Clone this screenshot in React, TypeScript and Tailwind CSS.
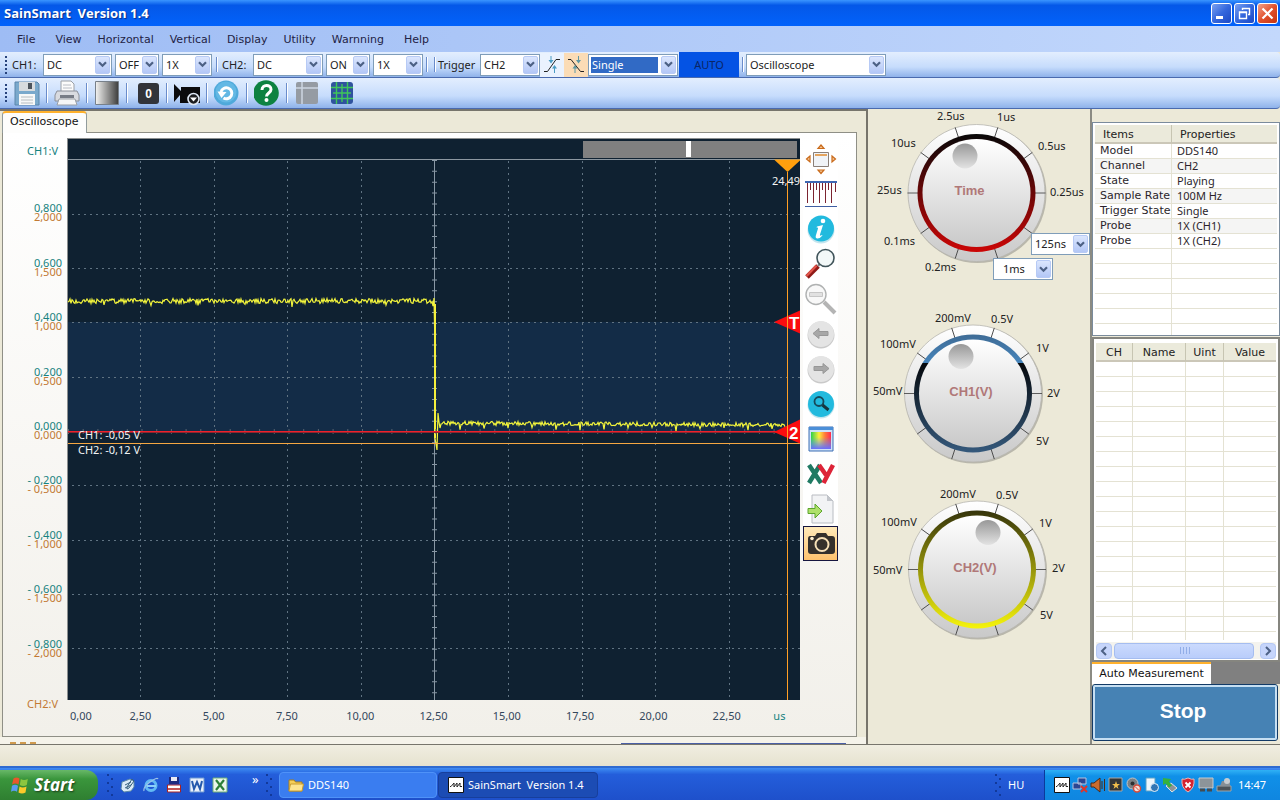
import React from 'react';

type Children = { children?: React.ReactNode };

/* ---------- shared controls ---------- */

function Chevron({ className = '' }: { className?: string }) {
  return (
    <span
      className={`pointer-events-none absolute inset-y-px right-px flex w-[15px] items-center justify-center rounded-xs border border-[#b7caf5] bg-linear-to-b from-[#dbe6fd] to-[#b3c7f6] ${className}`}
    >
      <svg width="9" height="7" viewBox="0 0 9 7" fill="none">
        <path d="M1 1.2 4.5 4.7 8 1.2" stroke="#4d6185" strokeWidth="2.2" />
      </svg>
    </span>
  );
}

function Select({ label, value, className, highlight = false }: { label: string; value: string; className: string; highlight?: boolean }) {
  return (
    <span className={`relative flex h-[22px] shrink-0 border border-[#7f9db9] bg-white p-[2px] ${className}`}>
      <select
        aria-label={label}
        defaultValue={value}
        className={`w-full appearance-none pr-4 pl-px font-['Noto_Sans',sans-serif] text-[11px] leading-4 outline-none ${highlight ? 'mr-[17px] bg-[#316ac5] text-white' : 'bg-white text-[#222]'}`}
      >
        <option>{value}</option>
      </select>
      <Chevron />
    </span>
  );
}

function Grip() {
  return (
    <span className="flex w-3 shrink-0 flex-col items-center justify-center gap-[2px]">
      {[0, 1, 2, 3, 4].map((i) => (
        <i key={i} className="size-[2px] bg-[#27437b]" />
      ))}
    </span>
  );
}

function Sep({ className = 'w-[10px]' }: { className?: string }) {
  return (
    <span className={`flex shrink-0 justify-center self-stretch py-[5px] ${className}`}>
      <i className="w-px bg-[#6a8ccb]" />
      <i className="w-px bg-white" />
    </span>
  );
}

/* ---------- window chrome ---------- */

function CaptionButton({ label, className, children }: Children & { label: string; className: string }) {
  return (
    <button aria-label={label} className={`flex size-[21px] items-center justify-center rounded-[3px] border border-white ${className}`}>
      <svg width="15" height="15" viewBox="0 0 15 15" fill="none" stroke="#fff">
        {children}
      </svg>
    </button>
  );
}

function TitleBar() {
  const blue = 'bg-linear-to-br from-[#7ba0f0] via-[#3467dd] to-[#1c48c4]';
  return (
    <header className="flex h-[26px] items-center bg-linear-to-b from-[#3a95ff] via-[#0458e8] via-20% to-[#0262fb] pr-[2px] pl-1">
      <h1 className="flex-1 font-['Open_Sans',sans-serif] text-[13px] font-bold whitespace-pre text-white [text-shadow:1px_1px_1px_#0a2f8a]">SainSmart  Version 1.4</h1>
      <div className="flex gap-[2px]">
        <CaptionButton label="Minimize" className={blue}>
          <path d="M2 11.5h7" strokeWidth="3" />
        </CaptionButton>
        <CaptionButton label="Restore" className={blue}>
          <path d="M5.5 4V2.5h7v6H11M5 2.5h8" strokeWidth="1.4" />
          <path d="M2.5 6h7v6.5h-7zM2 6.5h8" strokeWidth="1.4" />
        </CaptionButton>
        <CaptionButton label="Close" className="bg-linear-to-br from-[#f0a088] via-[#e1502b] to-[#c5330f]">
          <path d="m2.5 2.5 10 10m0-10-10 10" strokeWidth="2.2" />
        </CaptionButton>
      </div>
    </header>
  );
}

function MenuBar() {
  const items = ['File', 'View', 'Horizontal', 'Vertical', 'Display', 'Utility', 'Warnning', 'Help'];
  return (
    <nav className="flex h-[26px] items-center bg-linear-to-r from-[#9ebcf4] to-[#c3d8fc] pt-px pl-[9px]">
      {items.map((m, i) => (
        <button key={m} className={`px-2 py-1 text-[#222244] ${i === 0 || i === 6 ? 'mr-1' : ''}`}>
          {m}
        </button>
      ))}
    </nav>
  );
}

const barClass = 'flex items-center rounded-r border-b border-[#4a6aae] bg-linear-to-b from-[#e3eefe] via-[#c6dcfc] via-60% to-[#8fb2ea]';

function SettingsBar() {
  const label = "shrink-0 font-['Noto_Sans',sans-serif] text-[#222]";
  return (
    <div className={`${barClass} h-[26px]`}>
      <Grip />
      <span className={`${label} w-[31px]`}>CH1:</span>
      <div className="flex gap-[3px]">
        <Select label="CH1 coupling" value="DC" className="w-[69px]" />
        <Select label="CH1 enabled" value="OFF" className="w-[44px]" />
        <Select label="CH1 probe" value="1X" className="w-[50px]" />
      </div>
      <Sep />
      <span className={`${label} w-[31px]`}>CH2:</span>
      <div className="flex gap-[3px]">
        <Select label="CH2 coupling" value="DC" className="w-[70px]" />
        <Select label="CH2 enabled" value="ON" className="w-[44px]" />
        <Select label="CH2 probe" value="1X" className="w-[50px]" />
      </div>
      <Sep className="w-[8px]" />
      <Sep className="w-[7px]" />
      <span className={`${label} w-[42px]`}>Trigger</span>
      <Select label="Trigger source" value="CH2" className="w-[60px]" />
      <button aria-label="Rising edge" className="flex h-6 w-6 items-center justify-center bg-[#eaf2fe]">
        <svg width="18" height="18" viewBox="0 0 18 18" fill="none">
          <path d="M1 15.5h3.500L13 3.500h4" stroke="#222" />
          <path d="M8 0v4M11.500 17v-5" stroke="#4a9cc4" />
          <path d="M5.500 4h5L8 7.500zM9 12.500h5L11.500 9z" fill="#4a9cc4" />
        </svg>
      </button>
      <button aria-label="Falling edge" className="flex h-6 w-6 items-center justify-center bg-[#fbdcb6]">
        <svg width="18" height="18" viewBox="0 0 18 18" fill="none">
          <path d="M1 3.500h3L13.500 15.500H17" stroke="#222" />
          <path d="M11.500 0v4M8 17v-5" stroke="#5c98a4" />
          <path d="M9 4h5l-2.500 3.500zM5.500 12.500h5L8 9z" fill="#5c98a4" />
        </svg>
      </button>
      <Select label="Trigger mode" value="Single" className="w-[90px]" highlight />
      <button className="ml-px h-[25px] w-[60px] bg-[#0453e4] font-['Noto_Sans',sans-serif] text-[#0a2566]">AUTO</button>
      <Sep className="w-[7px]" />
      <Select label="Device mode" value="Oscilloscope" className="w-[140px]" />
    </div>
  );
}

function IconButton({ label, children, className = '' }: Children & { label: string; className?: string }) {
  return (
    <button aria-label={label} className={`flex h-7 w-[30px] shrink-0 items-center justify-center ${className}`}>
      <svg width="26" height="26" viewBox="0 0 26 26" fill="none">
        {children}
      </svg>
    </button>
  );
}

function IconBar() {
  return (
    <div className={`${barClass} h-[31px]`}>
      <Grip />
      <IconButton label="Save">
        <path d="M1 2h22l2 2v21H1z" fill="#7aa9cc" stroke="#5b86ab" />
        <path d="M5 2h16v9H5z" fill="#d7dbde" />
        <path d="M14 3h4v6h-4z" fill="#4c545c" />
        <path d="M5 14h16v11H5z" fill="#f7f8f8" />
        <path d="M7 17h12M7 20h12M7 23h12" stroke="#b6bcc0" />
      </IconButton>
      <Sep />
      <IconButton label="Print">
        <path d="M7 1h10l3 3v8H7z" fill="#fbfbfb" stroke="#9a9fa6" />
        <path d="M9 5h8M9 8h9" stroke="#b8bcc4" />
        <path d="M3 11h20l2 4v6H1v-6z" fill="#d9dbe0" stroke="#8b8f98" />
        <path d="M6 15h14v3H6z" fill="#777c86" />
        <path d="M5 19h16l2 6H3z" fill="#f6f6f7" stroke="#9a9fa6" />
      </IconButton>
      <Sep />
      <IconButton label="Gray scale">
        <defs>
          <linearGradient id="gray-scale">
            <stop stopColor="#f4f4f2" />
            <stop offset="1" stopColor="#3c3c3c" />
          </linearGradient>
        </defs>
        <path d="M1.500 1.500h23v23h-23z" fill="url(#gray-scale)" stroke="#77808a" />
      </IconButton>
      <Sep />
      <IconButton label="Reset to zero">
        <rect x="4" y="3" width="21" height="21" rx="3" fill="#32343a" />
        <text x="14.500" y="18" textAnchor="middle" fill="#fff" fontFamily="Liberation Sans, sans-serif" fontWeight="bold" fontSize="12">0</text>
      </IconButton>
      <Sep />
      <IconButton label="Record">
        <path d="M0 4v18l6-7v8h20V7H7v4z" fill="#0b0b0d" />
        <circle cx="19.500" cy="19" r="5.500" fill="#1c1d20" stroke="#dfe8f5" strokeWidth="1.600" />
        <path d="m16 17.500 3.500 4 3.500-4z" fill="#fff" />
      </IconButton>
      <Sep />
      <IconButton label="Refresh">
        <circle cx="12" cy="13" r="12.500" fill="#4fa9da" />
        <circle cx="12" cy="12" r="10.500" fill="#63b8e4" />
        <path d="M9.500 18a5.500 5.500 0 1 0-2.500-6" stroke="#fff" strokeWidth="3" />
        <path d="m3.500 11.500 4 6.500 5-6z" fill="#fff" />
      </IconButton>
      <Sep />
      <IconButton label="Help">
        <circle cx="12" cy="13" r="12.800" fill="#0d8241" />
        <path d="M8 10c0-6 9-6 9-.5 0 3.500-4.500 3.500-4.500 7" stroke="#fff" strokeWidth="3" />
        <circle cx="12.500" cy="20" r="2" fill="#fff" />
      </IconButton>
      <Sep />
      <IconButton label="Layout">
        <rect x="2" y="2" width="22" height="22" rx="2" fill="#959ba3" />
        <path d="M2 8h22M8 2v22" stroke="#cdd6e2" strokeWidth="1.500" />
      </IconButton>
      <IconButton label="Grid" className="ml-[5px]">
        <rect x="2" y="2" width="22" height="22" rx="3" fill="#2f529e" />
        <path d="M7.500 2v22M18.500 2v22M2 7.500h22M2 18.500h22M13 4v18M4 13h18" stroke="#3fc65a" strokeWidth="1.400" />
      </IconButton>
    </div>
  );
}

/* ---------- chart ---------- */

function noise(i: number) {
  const v = Math.sin(i * 127.1 + 11.7) * 43758.5453;
  return v - Math.floor(v) - 0.5;
}

function buildTrace() {
  const points: string[] = [];
  for (let x = 1; x < 367; x += 1) {
    const spike = x % 47 === 37 ? 4 : 0;
    points.push(`${x},${(163 + noise(x) * 5 + spike).toFixed(1)}`);
  }
  points.push('367,160', '368,210', '368,300', '369,306', '370,312', '371,275', '372,284', '373,290');
  for (let x = 374; x < 719; x += 1) {
    const spike = x % 24 === 9 ? 5 : 0;
    points.push(`${x},${(285 + (x - 374) / 170 + noise(x) * 4 + spike).toFixed(1)}`);
  }
  return points.join(' ');
}

const trace = buildTrace();
const gridX = [73, 147, 220, 294, 441, 515, 588, 662];
const gridY = [76, 130, 184, 239, 347, 402, 456, 510];

function Plot() {
  return (
    <svg className="absolute inset-0 h-full w-full bg-[#0f2131]" viewBox="0 0 733 562" preserveAspectRatio="none" role="img" aria-label="Oscilloscope trace">
      <rect y="184" width="733" height="109" fill="#132c47" />
      <path d="M0 .5h733M.5 0v562" stroke="#8c8f8f" />
      <path d="M0 21.500h733" stroke="#8d98a1" />
      <g stroke="#607382" strokeDasharray="2 4">
        {gridX.map((x) => (
          <path key={x} d={`M${x + 0.5} 23V562`} />
        ))}
        {gridY.map((y) => (
          <path key={y} d={`M5 ${y + 0.5}H733`} />
        ))}
      </g>
      <path d="M367.500 22V562" stroke="#8998a5" />
      <path d="M367.500 22V562" stroke="#8998a5" strokeWidth="5" strokeDasharray="1 9.860" />
      <polyline points={trace} fill="none" stroke="#f2f43c" strokeWidth="1.200" />
      <rect x="367" y="166" width="2" height="134" fill="#f4ef3c" />
      <path d="M1 293.500h732" stroke="#59636f" strokeWidth="5" strokeDasharray="1 13.700" />
      <rect x="1" y="293" width="732" height="1" fill="#f0202a" />
      <rect x="1" y="294" width="732" height="1" fill="#8c2630" />
      <rect x="1" y="305" width="732" height="1" fill="#f5a742" />
      <rect x="516" y="3" width="214" height="17" fill="#808080" />
      <rect x="619" y="3" width="5" height="16" fill="#fff" />
      <path d="M707 21.500h26v1L720.500 34z" fill="#ff9f0e" />
      <path d="m707 184 26-11.500v23zM707 294l26-12.500v24z" fill="#fa0d10" />
      <g fill="#fff" fontFamily="Liberation Sans, sans-serif" fontWeight="bold" fontSize="17">
        <text x="722" y="191">T</text>
        <text x="722" y="301">2</text>
      </g>
      <rect x="720" y="34" width="1" height="528" fill="#ff9f24" />
      <g fill="#f2f4f5" fontFamily="Noto Sans, sans-serif" fontSize="11">
        <text x="705" y="47">24,49</text>
        <text x="11" y="301">CH1: -0,05 V</text>
        <text x="11" y="316">CH2: -0,12 V</text>
      </g>
    </svg>
  );
}

const yLabels = [
  ['0,800', '2,000'],
  ['0,600', '1,500'],
  ['0,400', '1,000'],
  ['0,200', '0,500'],
  ['0,000', '0,000'],
  ['- 0,200', '- 0,500'],
  ['- 0,400', '- 1,000'],
  ['- 0,600', '- 1,500'],
  ['- 0,800', '- 2,000'],
];
const xLabels = ['2,50', '5,00', '7,50', '10,00', '12,50', '15,00', '17,50', '20,00', '22,50'];

function SideTool({ label, children, active = false }: Children & { label: string; active?: boolean }) {
  return (
    <button
      aria-label={label}
      className={`flex h-[35px] w-[35px] items-center justify-center ${active ? 'border border-[#161640] bg-linear-to-b from-[#ffe9b8] to-[#ffc26e]' : ''}`}
    >
      <svg width="32" height="32" viewBox="0 0 32 32" fill="none" className="shrink-0">
        {children}
      </svg>
    </button>
  );
}

function SideTools() {
  return (
    <div className="mt-[3px] ml-[3px] flex flex-col self-start bg-white">
      <SideTool label="Fit to window">
        <path d="M8.500 9.500h15v14h-15z" fill="#f0f3f7" stroke="#8a7f78" />
        <path d="M10 12h12" stroke="#e08a2c" strokeWidth="1.500" />
        <path d="m13 5.500 3-3.500 3 3.500zM13 27l3 3.500 3-3.500zM5 13l-3.500 3L5 19zM27 13l3.500 3-3.500 3z" fill="#f5c694" stroke="#c96a1a" strokeWidth="1.200" />
      </SideTool>
      <SideTool label="Ruler">
        <path d="M0 4h32" stroke="#3f68b2" strokeWidth="2" />
        <path d="M0 28.500h32" stroke="#3f5ea2" />
        <path d="M2.500 5v20M8.500 5v20M14.500 5v20M20.500 5v20M26.500 5v20" stroke="#7c2430" />
        <path d="M5.500 5v7M11.500 5v7M17.500 5v7M23.500 5v7M30.500 5v9" stroke="#7c2430" />
      </SideTool>
      <SideTool label="Information">
        <circle cx="16" cy="17" r="13.500" fill="#c3e5ee" />
        <circle cx="16" cy="15.500" r="13" fill="#22bade" />
        <circle cx="18" cy="8" r="2.300" fill="#fff" />
        <path d="M12 13.500l6-1.500-3 9.500q-.5 2 2 .5l.5.500q-3 3.500-5.500 3-2-.5-1-3.500l2-6.500q.3-1.500-1.500-1z" fill="#fff" />
      </SideTool>
      <SideTool label="Zoom in">
        <path d="M2 29 13 18" stroke="#8f1a17" strokeWidth="5" />
        <path d="m1.500 28 10-10.500" stroke="#e0544a" strokeWidth="2.500" />
        <path d="m13 18 3-3.500" stroke="#888" strokeWidth="2.500" />
        <circle cx="20.500" cy="10" r="8.500" fill="#f3f8f8" stroke="#40545a" strokeWidth="1.600" />
      </SideTool>
      <SideTool label="Zoom out">
        <path d="m19 19 11 11" stroke="#b4b4b4" strokeWidth="4" />
        <circle cx="11" cy="11.500" r="10" fill="#f8f8f8" stroke="#b0b2b2" strokeWidth="1.400" />
        <path d="M4.500 9.500h13v4h-13z" fill="#e1e1e1" stroke="#c6c6c6" />
      </SideTool>
      <SideTool label="Previous">
        <circle cx="16" cy="17" r="13.500" fill="#c9c9c9" />
        <circle cx="16" cy="16" r="13" fill="#e4e4e4" />
        <path d="m8 15.500 6-5v3h9v4h-9v3z" fill="#a7a7a7" stroke="#979797" />
      </SideTool>
      <SideTool label="Next">
        <circle cx="16" cy="17" r="13.500" fill="#c9c9c9" />
        <circle cx="16" cy="16" r="13" fill="#e4e4e4" />
        <path d="m24 15.500-6-5v3H9v4h9v3z" fill="#a7a7a7" stroke="#979797" />
      </SideTool>
      <SideTool label="Search">
        <circle cx="16" cy="17" r="13.500" fill="#c3e5ee" />
        <circle cx="16" cy="16" r="13" fill="#22bade" />
        <circle cx="14" cy="13.500" r="4.500" stroke="#17495a" strokeWidth="1.800" />
        <path d="m17.500 17 6 5" stroke="#17353f" strokeWidth="3" />
      </SideTool>
      <SideTool label="Colors">
        <defs>
          <linearGradient id="hue">
            <stop stopColor="#2fd04a" />
            <stop offset=".4" stopColor="#ffee3a" />
            <stop offset=".7" stopColor="#ff7a3a" />
            <stop offset="1" stopColor="#ff2a50" />
          </linearGradient>
          <linearGradient id="shade" x2="0" y2="1">
            <stop offset=".3" stopColor="#4aa0ff" stopOpacity="0" />
            <stop offset="1" stopColor="#6a6cff" />
          </linearGradient>
        </defs>
        <path d="M4 4h24v24H4z" fill="#cfe2f8" stroke="#3c6fb4" />
        <path d="M4 4h24v3H4z" fill="#4b8fd8" />
        <path d="M6 9h20v17H6z" fill="url(#hue)" />
        <path d="M6 9h20v17H6z" fill="url(#shade)" />
      </SideTool>
      <SideTool label="XY mode">
        <path d="m4 7 12 18M15 7 4 25" stroke="#207a63" strokeWidth="4.500" />
        <path d="m14 7 7 10M28 7l-9.500 18" stroke="#dd2438" strokeWidth="4.500" />
      </SideTool>
      <SideTool label="Export">
        <path d="M7 2h15l6 6v22H7z" fill="#f2f3f5" stroke="#b9bcc2" />
        <path d="M22 2v6h6z" fill="#c2c5cb" />
        <path d="M3 15.500h7V11l7 7-7 7v-4.500H3z" fill="#aee06a" stroke="#5da52e" />
      </SideTool>
      <SideTool label="Snapshot" active>
        <path d="M5 8h5l2-3h9l2 3h4q3 0 3 3v12q0 3-3 3H6q-3 0-3-3V11q0-3 2-3z" fill="#35302c" />
        <circle cx="17" cy="16.500" r="6.500" fill="#35302c" stroke="#f6dfb6" strokeWidth="2" />
        <circle cx="7" cy="10.500" r="1.800" fill="#fff0d0" />
      </SideTool>
    </div>
  );
}

function ScopePanel() {
  return (
    <section className="flex min-w-0 flex-1 flex-col border-r-2 border-[#77746b] bg-[#ece9d8]">
      <div className="flex h-[23px] items-end border-t-2 border-[#77756c] pl-[2px]">
        <button className="z-10 -mb-px h-[22px] rounded-t-sm border border-t-2 border-b-0 border-[#919b9c] border-t-[#ffb12c] bg-[#fdfdfc] px-[7px] pb-[2px] text-[#111]">Oscilloscope</button>
      </div>
      <div className="mr-[9px] ml-[2px] flex min-h-0 flex-1 flex-col border border-[#8f8f86] bg-linear-to-b from-white to-[#f2f0ea] pt-[5px]">
        <div className="flex min-h-0 flex-1">
          <div className="-mb-[11px] flex w-[64px] shrink-0 flex-col pr-[5px] text-right font-['Noto_Sans',sans-serif] leading-[9px]">
            <span className="h-[47px] pt-2 pr-1 text-[#16827f]">CH1:V</span>
            {yLabels.map(([a, b]) => (
              <span key={a} className="flex flex-1 flex-col justify-center">
                <span className="text-[#16827f]">{a}</span>
                <span className="text-[#c27a34]">{b}</span>
              </span>
            ))}
            <span className="h-9 pt-6 pr-1 text-[#c27a34]">CH2:V</span>
          </div>
          <div className="relative min-h-[300px] min-w-0 flex-1">
            <Plot />
          </div>
          <SideTools />
          <div className="w-[18px] shrink-0" />
        </div>
        <div className="mr-14 ml-[64px] flex h-9 shrink-0 pt-2 font-['Noto_Sans',sans-serif] text-[#33475c]">
          <span className="min-w-0 flex-1">
            <span className="block pl-[3px]">0,00</span>
          </span>
          {xLabels.map((x) => (
            <span key={x} className="min-w-0 flex-[2] text-center">{x}</span>
          ))}
          <span className="min-w-0 flex-1">
            <span className="block pl-[10px] text-[#16827f]">us</span>
          </span>
        </div>
      </div>
      <div className="flex h-[7px] shrink-0 items-end justify-between bg-[#f5f3ea] pr-5 pl-[10px]">
        <i className="w-[26px] border-t-2 border-dashed border-[#cf9a4e]" />
        <i className="w-[225px] border-t border-[#4a5fa5]" />
      </div>
    </section>
  );
}

/* ---------- knobs ---------- */

type KnobProps = {
  id: string;
  title: string;
  height: number;
  cx: number;
  cy: number;
  dot: number;
  stops: [number, string][];
  labels: [string, number, number][];
};

function Knob({ id, title, height, cx, cy, dot, stops, labels }: KnobProps) {
  return (
    <svg width="222" height={height} viewBox={`0 0 222 ${height}`} className="block" role="group" aria-label={title}>
      <defs>
        <linearGradient id={`${id}-ring`} x2="0" y2="1">
          {stops.map(([o, c], i) => (
            <stop key={i} offset={o} stopColor={c} />
          ))}
        </linearGradient>
        <linearGradient id={`${id}-face`} x2="0" y2="1">
          <stop stopColor="#fff" />
          <stop offset="1" stopColor="#c9c9c9" />
        </linearGradient>
        <linearGradient id={`${id}-dot`} x2="0" y2="1">
          <stop stopColor="#989898" />
          <stop offset="1" stopColor="#e3e3e3" />
        </linearGradient>
      </defs>
      <circle cx={cx + 1} cy={cy + 1} r="69" fill="#b9b7ab" />
      <circle cx={cx} cy={cy} r="68.500" fill={`url(#${id}-face)`} stroke="#b6b5ae" strokeWidth=".8" />
      {[0, 36, 72, 108, 144, 180, 216, 252, 288, 324].map((a) => (
        <path key={a} d={`M${cx + 58} ${cy}h11`} stroke="#4c4c4c" strokeWidth=".9" transform={`rotate(${a} ${cx} ${cy})`} />
      ))}
      <circle cx={cx} cy={cy} r="59" fill={`url(#${id}-ring)`} />
      <circle cx={cx} cy={cy} r="54" fill={`url(#${id}-face)`} />
      <circle cx={cx + dot} cy={cy - 37} r="12.500" fill={`url(#${id}-dot)`} />
      <text x={id === 'time' ? cx - 7 : cx - 2} y={cy + 2} textAnchor="middle" fill="#b07878" fontFamily="Liberation Sans, sans-serif" fontWeight="bold" fontSize="13">{title}</text>
      <g fill="#222" fontFamily="Noto Sans, sans-serif" fontSize="11">
        {labels.map(([t, x, y]) => (
          <text key={t} x={x} y={y}>{t}</text>
        ))}
      </g>
    </svg>
  );
}

function KnobPanel() {
  return (
    <section className="relative w-[224px] shrink-0 border-r-2 border-[#8b8b83] bg-[#ece9d8]">
      <Knob
        id="time" title="Time" height={200} cx={108.5} cy={84} dot={-11.5}
        stops={[[0, '#080808'], [1, '#cc0606']]}
        labels={[['2.5us', 69, 11], ['1us', 129, 12], ['10us', 23, 38], ['0.5us', 170, 41], ['25us', 9, 85], ['0.25us', 182, 87], ['0.1ms', 16, 136], ['0.2ms', 57, 162]]}
      />
      <Knob
        id="ch1" title="CH1(V)" height={176} cx={105} cy={84.5} dot={-12}
        stops={[[0, '#3f6c96'], [0.24, '#4684ba'], [0.24, '#05080c'], [1, '#35597c']]}
        labels={[['200mV', 67, 13], ['0.5V', 123, 14], ['100mV', 12, 39], ['1V', 168, 43], ['50mV', 5, 86], ['2V', 179, 88], ['5V', 168, 136]]}
      />
      <Knob
        id="ch2" title="CH2(V)" height={176} cx={109} cy={84.5} dot={11}
        stops={[[0, '#35340b'], [1, '#f6f40c']]}
        labels={[['200mV', 72, 13], ['0.5V', 128, 14], ['100mV', 13, 41], ['1V', 171, 42], ['50mV', 5, 89], ['2V', 184, 87], ['5V', 172, 134]]}
      />
      <div className="absolute top-[124px] right-0">
        <Select label="Fast time base" value="125ns" className="w-[59px]" />
      </div>
      <div className="absolute top-[149px] left-[125px]">
        <Select label="Slow time base" value="1ms" className="w-[60px] pl-[8px]" />
      </div>
    </section>
  );
}

/* ---------- right column ---------- */

const info = [
  ['Model', 'DDS140'],
  ['Channel', 'CH2'],
  ['State', 'Playing'],
  ['Sample Rate', '100M Hz'],
  ['Trigger State', 'Single'],
  ['Probe', '1X (CH1)'],
  ['Probe', '1X (CH2)'],
  ['', ''], ['', ''], ['', ''], ['', ''], ['', ''], ['', ''],
];

function ScrollBar() {
  const btn = 'flex size-[16px] items-center justify-center rounded-sm border border-[#b4c8f4] bg-[#c6d5fb]';
  return (
    <div className="flex h-[17px] shrink-0 items-center gap-[2px] bg-[#f4f3ee]">
      <button aria-label="Scroll left" className={btn}>
        <svg width="8" height="10" viewBox="0 0 8 10" fill="none"><path d="M6 1 2 5l4 4" stroke="#4d6185" strokeWidth="2" /></svg>
      </button>
      <span className="flex h-[16px] flex-1 items-center justify-center gap-px rounded-sm border border-[#a5bdf0] bg-linear-to-b from-[#cbdafd] to-[#b9cdfb]">
        {[0, 1, 2, 3].map((i) => (
          <i key={i} className="h-[7px] w-px border-r border-[#92aee8] pr-px" />
        ))}
      </span>
      <span className="w-[2px]" />
      <button aria-label="Scroll right" className={btn}>
        <svg width="8" height="10" viewBox="0 0 8 10" fill="none"><path d="m2 1 4 4-4 4" stroke="#4d6185" strokeWidth="2" /></svg>
      </button>
    </div>
  );
}

function RightPanel() {
  const th = 'h-[19px] border-b-2 border-b-[#cbc7b8] bg-[#ebeadb] p-0 pt-[2px] font-normal leading-[15px] text-[#222]';
  const split = 'border-r border-r-[#c7c5b2]';
  const cell = 'h-[15px] overflow-hidden border-b border-[#e4e2d3] p-0 leading-[14px] whitespace-nowrap';
  const lastCell = 'h-2 border-[#e4e2d3] p-0';
  return (
    <aside className="flex w-[188px] shrink-0 flex-col bg-[#ece9d8] pt-[13px]">
      <div className="h-[214px] shrink-0 overflow-hidden border border-[#7a8b9c] bg-white px-[2px] pt-[2px]">
        <table className="w-full table-fixed border-separate border-spacing-0">
          <colgroup>
            <col className="w-[77px]" />
            <col />
          </colgroup>
          <thead>
            <tr>
              <th className={`${th} ${split} pl-2 text-left`}>Items</th>
              <th className={`${th} pl-2 text-left`}>Properties</th>
            </tr>
          </thead>
          <tbody>
            {info.map(([a, b], i) => (
              <tr key={i} className={i % 2 === 1 && i < 7 ? 'bg-[#f5f5f4]' : ''}>
                <td className={`${cell} border-r pl-[5px] text-[#2b1f2b]`}>{a}</td>
                <td className={`${cell} pl-[5px] font-['Noto_Sans',sans-serif] text-[#2b1f2b]`}>{b}</td>
              </tr>
            ))}
          </tbody>
        </table>
      </div>
      <div className="mt-px flex min-h-0 flex-1 flex-col overflow-hidden border-2 border-[#85857f] bg-white px-[2px] pt-[4px] pb-px">
        <div className="min-h-0 flex-1 overflow-hidden">
          <table className="w-full table-fixed border-separate border-spacing-0">
            <colgroup>
              <col className="w-[37px]" />
              <col className="w-[53px]" />
              <col className="w-[38px]" />
              <col />
            </colgroup>
            <thead>
              <tr>
                <th className={`${th} ${split}`}>CH</th>
                <th className={`${th} ${split}`}>Name</th>
                <th className={`${th} ${split}`}>Uint</th>
                <th className={th}>Value</th>
              </tr>
            </thead>
            <tbody>
              {Array.from({ length: 18 }, (_, i) => (
                <tr key={i}>
                  <td className={`${cell} border-r`} />
                  <td className={`${cell} border-r`} />
                  <td className={`${cell} border-r`} />
                  <td className={cell} />
                </tr>
              ))}
              <tr>
                <td className={`${lastCell} border-r`} />
                <td className={`${lastCell} border-r`} />
                <td className={`${lastCell} border-r`} />
                <td className={lastCell} />
              </tr>
            </tbody>
          </table>
        </div>
        <ScrollBar />
      </div>
      <div className="flex h-[22px] shrink-0 bg-[#808080]">
        <button className="w-[119px] border-t-2 border-[#ffb12c] bg-white text-[#111]">Auto Measurement</button>
      </div>
      <button className="mr-[2px] mb-[3px] h-[57px] shrink-0 rounded-[3px] border border-[#123a66] bg-[#4682b4] pr-1 pb-1 font-['Liberation_Sans',sans-serif] text-[21px] font-bold text-white outline-2 -outline-offset-3 outline-[#c6dff2]">
        Stop
      </button>
    </aside>
  );
}

/* ---------- taskbar ---------- */

function Tiny({ children, label }: Children & { label: string }) {
  return (
    <svg width="16" height="16" viewBox="0 0 16 16" fill="none" role="img" aria-label={label} className="shrink-0">
      {children}
    </svg>
  );
}

function Wave() {
  return (
    <Tiny label="SainSmart">
      <path d="M.5.500h15v15H.5z" fill="#fff" stroke="#111" />
      <path d="M2 9.500h1L6 6v4l3-4v4l3-4v3.500h2" stroke="#222" />
    </Tiny>
  );
}

function TaskGrip() {
  return (
    <span className="grid grid-cols-2 gap-[2px]">
      {Array.from({ length: 12 }, (_, i) => (
        <i key={i} className={`size-[2px] ${i % 4 === 0 || i % 4 === 3 ? 'bg-[#12399a]' : ''}`} />
      ))}
    </span>
  );
}

function Taskbar() {
  return (
    <footer className="flex h-[34px] shrink-0 items-center border-t-2 border-[#2e6ad0] bg-linear-to-b from-[#3f8cf3] via-[#245edb] via-20% to-[#1e50cb] pt-[2px] font-['Noto_Sans',sans-serif] text-white">
      <button className="flex h-[30px] w-[98px] shrink-0 items-center gap-[5px] self-end rounded-r-xl bg-linear-to-b from-[#68b868] via-[#3a963c] via-30% to-[#2f7f31] pl-[11px] font-['Open_Sans',sans-serif] text-[17px] font-bold italic [text-shadow:1px_1px_2px_#1a3d1a]">
        <svg width="18" height="18" viewBox="0 0 18 18" aria-hidden="true">
          <path d="M2.500 2.500q3-2 6 0l-1 6q-3-2-6.500 0z" fill="#e9572b" />
          <path d="M9.800 3q3 2 7 0l-1 6q-3.500 2-7 0z" fill="#8cc63f" />
          <path d="M1 9.800q3-2 6 0l-1 6q-3-2-6 0z" fill="#5a9cf0" />
          <path d="M8.500 10.500q3 2 7 0l-1 6q-3.500 2-7 0z" fill="#fbca2a" />
        </svg>
        Start
      </button>
      <div className="flex w-[181px] shrink-0 items-center gap-[7px] pl-[9px]">
        <TaskGrip />
        <Tiny label="Desktop">
          <path d="M2 5l8-3 4 2v6l-3 4-7 1-3-3z" fill="#dcebf7" stroke="#5b88a8" />
          <path d="M5 8l6-3M5 11l6-3M12 2l2 2-5 7-2 1v-2z" stroke="#37617e" />
        </Tiny>
        <Tiny label="Internet">
          <circle cx="8" cy="8.500" r="5" stroke="#63baf4" strokeWidth="3" />
          <path d="M4 9h9" stroke="#8dd0fa" strokeWidth="2" />
          <path d="M1 14Q0 10 7 5t8-3" stroke="#9bc2e8" strokeWidth="1.200" />
        </Tiny>
        <Tiny label="Commander">
          <path d="M3 0h10v7H3z" fill="#1d2a80" />
          <path d="M5 0h6v4H5z" fill="#e8eaf4" />
          <path d="M1.500 8h13v7h-13z" fill="#fff" stroke="#a22" />
          <path d="M2 12h12" stroke="#b11c1c" strokeWidth="1.500" />
        </Tiny>
        <Tiny label="Word">
          <path d="M1 1h14v14H1z" fill="#e9f0fb" stroke="#6d96cf" />
          <path d="m3 4 2 8 3-7 3 7 2-8" stroke="#2458ac" strokeWidth="2" />
        </Tiny>
        <Tiny label="Excel">
          <path d="M1 1h14v14H1z" fill="#eaf5ea" stroke="#6fae78" />
          <path d="m4 3 8 10M12 3 4 13" stroke="#2c8038" strokeWidth="2.200" />
        </Tiny>
        <span className="-mt-3 ml-[17px] text-[13px]">»</span>
        <TaskGrip />
      </div>
      <button className="flex h-[26px] w-[158px] shrink-0 items-center gap-[4px] rounded-sm border border-[#4f92f8] bg-[#3a7df0] pl-2">
        <Tiny label="Folder">
          <path d="M1 3h5l1.500 2H14v9H1z" fill="#f5cf58" stroke="#a87f1c" />
          <path d="M2.500 7h13L14 14H1z" fill="#fde590" stroke="#c89c30" />
        </Tiny>
        DDS140
      </button>
      <button className="ml-px flex h-[26px] w-[160px] shrink-0 items-center gap-[4px] rounded-sm border border-[#173f9c] bg-[#1c4cb4] pl-[9px] whitespace-pre">
        <Wave />
        SainSmart  Version 1.4
      </button>
      <div className="flex-1" />
      <TaskGrip />
      <span className="w-[43px] pl-[7px]">HU</span>
      <div className="flex h-full w-[236px] shrink-0 items-center gap-[2px] border-l border-[#0b3a9c] bg-linear-to-b from-[#2fb1f5] via-[#1090e8] via-20% to-[#0f86e0] pl-[9px]">
        <Wave />
        <Tiny label="Network">
          <path d="M6 1h8v6H6zM1 6h8v6H1z" fill="#2b4592" stroke="#b7c3de" />
          <path d="m9 9 6 6m0-6-6 6" stroke="#e03428" strokeWidth="2" />
        </Tiny>
        <Tiny label="Volume">
          <path d="M1 6h3l6-5v14l-6-5H1z" fill="#c96c2f" stroke="#4b2a18" />
          <path d="M12 4v8M14.500 2v12" stroke="#4b2a18" />
        </Tiny>
        <Tiny label="Device">
          <path d="M1 1h13v13H1z" fill="#343637" stroke="#a7a8a8" />
          <path d="m8 4 1 3h3l-2.500 2 1 3L8 10l-2.500 2 1-3L4 7h3z" fill="#f2bf4c" />
        </Tiny>
        <Tiny label="Muted">
          <circle cx="6.500" cy="6.500" r="5.500" fill="#7b8084" stroke="#c1c5c8" />
          <circle cx="6.500" cy="6.500" r="2" fill="#2d2f31" />
          <circle cx="11" cy="11.500" r="3.500" fill="#f6dfd9" stroke="#d64b3a" strokeWidth="1.500" />
          <path d="m9 9.500 4 4" stroke="#d64b3a" />
        </Tiny>
        <Tiny label="Sync">
          <path d="M2 1h9v13H2z" fill="#eef6fb" stroke="#5aa1c6" />
          <circle cx="10.500" cy="10.500" r="4" fill="#3176b4" stroke="#e3f0fa" />
        </Tiny>
        <Tiny label="Safely remove hardware">
          <path d="m4 9 5-3 6 5-5 4z" fill="#8c9396" stroke="#dfe3e5" />
          <path d="M1 1l8 1-2 2.500 3 4-3 2-3.500-4L1 8z" fill="#36b13e" />
        </Tiny>
        <Tiny label="Security">
          <path d="M8 1q4 2 6 1 1 9-6 13Q1 11 2 2q2 1 6-1z" fill="#d52330" stroke="#e9b7b5" />
          <path d="m5.500 5.500 5 5m0-5-5 5" stroke="#fff" strokeWidth="1.800" />
        </Tiny>
        <Tiny label="Display">
          <path d="M1 1h14v10H1z" fill="#8d9499" stroke="#c6cbce" />
          <path d="M2 13h5M9 13h5" stroke="#454b50" strokeWidth="3" />
        </Tiny>
        <Tiny label="Drive">
          <path d="M1 9h14v5H1z" fill="#4d5459" stroke="#9ca4a9" />
          <path d="M4 9l2-5h8v5z" fill="#878f95" />
          <circle cx="11" cy="4" r="3" fill="#c7cdd1" />
        </Tiny>
        <time className="ml-1">14:47</time>
      </div>
    </footer>
  );
}

export default function App() {
  return (
    <div className="flex min-h-screen flex-col bg-[#ece9d8] font-['DejaVu_Sans',sans-serif] text-[11px] leading-4">
      <TitleBar />
      <MenuBar />
      <SettingsBar />
      <IconBar />
      <main className="flex min-h-0 flex-1">
        <ScopePanel />
        <KnobPanel />
        <RightPanel />
      </main>
      <div className="h-[22px] shrink-0 border-t border-[#77756c] bg-linear-to-b from-[#f0eee1] to-[#e6e2cf]" />
      <Taskbar />
    </div>
  );
}
